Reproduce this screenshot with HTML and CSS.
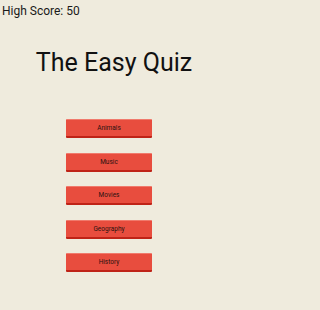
FILE: index.html
```html
<!DOCTYPE html>
<html>
<head>
<meta charset="utf-8">
<link rel="stylesheet" href="styles.css">
</head>
<body>
<div class="screen">
  <div class="score">High Score: 50</div>
  <h1 class="title">The Easy Quiz</h1>
  <div class="menu">
    <button class="btn">Animals</button>
    <button class="btn">Music</button>
    <button class="btn">Movies</button>
    <button class="btn">Geography</button>
    <button class="btn">History</button>
  </div>
</div>
</body>
</html>
```
FILE: styles.css
```css
html, body {
  margin: 0;
  padding: 0;
  background: #efebdd;
}
.screen {
  width: 215px;
  height: 310px;
  display: flex;
  flex-direction: column;
  font-family: Roboto, "Liberation Sans", sans-serif;
  color: #1a1a1a;
}
.score {
  font-size: 12px;
  line-height: 14px;
  padding: 4px 0 0 2px;
}
.title {
  margin: 0;
  font-weight: 400;
  font-size: 25px;
  line-height: 30px;
  padding: 30px 0 0 13px;
  text-align: center;
  color: #111;
}
.menu {
  display: flex;
  flex-direction: column;
  align-items: flex-start;
  padding: 41px 0 0 66px;
  gap: 14.5px;
}
.btn {
  width: 86px;
  height: 19px;
  margin: 0;
  padding: 0;
  border: none;
  border-top: 1px solid #f07a6c;
  border-bottom: 2px solid #bf2317;
  border-radius: 1px;
  background: #e84d3e;
  font-family: Roboto, "Liberation Sans", sans-serif;
  font-size: 6.5px;
  color: #2a1210;
  box-sizing: border-box;
}
```
